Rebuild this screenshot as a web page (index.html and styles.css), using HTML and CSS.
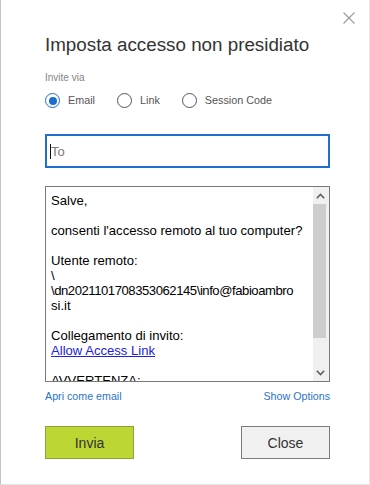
FILE: index.html
```html
<!DOCTYPE html>
<html lang="it">
<head>
<meta charset="utf-8">
<title>Imposta accesso non presidiato</title>
<link rel="stylesheet" href="styles.css">
</head>
<body>
<div class="dialog">
  <div class="topbar">
    <button class="x-btn" aria-label="Chiudi">
      <svg width="12" height="12" viewBox="0 0 12 12"><path d="M0.5 0.5 L11.5 11.5 M11.5 0.5 L0.5 11.5" stroke="#9a9a9a" stroke-width="1.1" fill="none"/></svg>
    </button>
  </div>
  <h1 class="title">Imposta accesso non presidiato</h1>
  <div class="label">Invite via</div>
  <div class="radios">
    <label class="radio"><span class="circle checked"><span class="dot"></span></span><span class="rtext">Email</span></label>
    <label class="radio"><span class="circle"></span><span class="rtext">Link</span></label>
    <label class="radio"><span class="circle"></span><span class="rtext">Session Code</span></label>
  </div>
  <div class="to-field"><span class="caret"></span><span class="placeholder">To</span></div>
  <div class="message">
    <div class="msg-text">
      <p>Salve,</p>
      <p>consenti l'accesso remoto al tuo computer?</p>
      <p>Utente remoto:<br>\<br><span class="tight">\dn2021101708353062145\info@fabioambro</span><br>si.it</p>
      <p>Collegamento di invito:<br><a class="access" href="#">Allow Access Link</a></p>
      <p>AVVERTENZA:</p>
    </div>
    <div class="scrollbar">
      <div class="sb-arrow">
        <svg width="9" height="6" viewBox="0 0 9 6"><path d="M0.8 5.2 L4.5 1.5 L8.2 5.2" stroke="#606060" stroke-width="1.6" fill="none"/></svg>
      </div>
      <div class="sb-track"><div class="sb-thumb"></div></div>
      <div class="sb-arrow">
        <svg width="9" height="6" viewBox="0 0 9 6"><path d="M0.8 0.8 L4.5 4.5 L8.2 0.8" stroke="#606060" stroke-width="1.6" fill="none"/></svg>
      </div>
    </div>
  </div>
  <div class="links">
    <a href="#" class="link">Apri come email</a>
    <a href="#" class="link">Show Options</a>
  </div>
  <div class="buttons">
    <button class="btn send">Invia</button>
    <button class="btn close">Close</button>
  </div>
</div>
</body>
</html>
```

FILE: styles.css
```css
html, body {
  margin: 0;
  padding: 0;
  background: #ffffff;
}
body {
  font-family: "Liberation Sans", Arial, sans-serif;
}
.dialog {
  width: 370px;
  height: 485px;
  box-sizing: border-box;
  border-left: 1px solid #c4c4c4;
  border-right: 1px solid #e6e6e6;
  border-bottom: 1px solid #e6e6e6;
  padding: 0 39px 0 44px;
  display: flex;
  flex-direction: column;
  background: #fff;
}
.topbar {
  height: 33px;
  display: flex;
  justify-content: flex-end;
  align-items: flex-start;
}
.x-btn {
  margin: 12px -25px 0 0;
  padding: 0;
  width: 12px;
  height: 12px;
  border: 0;
  background: transparent;
  display: flex;
}
.title {
  margin: 0;
  font-size: 18.8px;
  line-height: 24px;
  font-weight: normal;
  color: #333333;
  white-space: nowrap;
}
.label {
  margin-top: 15px;
  font-size: 10px;
  line-height: 12px;
  color: #858585;
}
.radios {
  margin-top: 9px;
  height: 15px;
  display: flex;
  align-items: center;
  gap: 22px;
}
.radio {
  display: flex;
  align-items: center;
  gap: 8px;
}
.circle {
  width: 15px;
  height: 15px;
  box-sizing: border-box;
  border: 1px solid #555555;
  border-radius: 50%;
  display: flex;
  align-items: center;
  justify-content: center;
}
.circle.checked {
  border-color: #1b6fd1;
}
.dot {
  width: 8px;
  height: 8px;
  border-radius: 50%;
  background: #1b6fd1;
}
.rtext {
  font-size: 10.8px;
  line-height: 15px;
  color: #555555;
}
.to-field {
  margin-top: 26px;
  height: 34px;
  box-sizing: border-box;
  border: 2px solid #1f6fcf;
  display: flex;
  align-items: center;
  padding-left: 3px;
}
.caret {
  width: 1px;
  height: 15px;
  background: #111;
  margin-right: -1px;
}
.placeholder {
  font-size: 13px;
  color: #7a7a7a;
  padding-left: 1px;
}
.message {
  margin-top: 18px;
  height: 196px;
  box-sizing: border-box;
  border: 1px solid #7a7a7a;
  display: flex;
  overflow: hidden;
}
.msg-text {
  flex: 1;
  padding: 6px 0 0 5px;
  font-size: 13.1px;
  line-height: 15px;
  color: #000;
  overflow: hidden;
  white-space: nowrap;
}
.msg-text p {
  margin: 0 0 15px 0;
}
.tight {
  letter-spacing: -0.45px;
}
.access {
  color: #2222d9;
  text-decoration: underline;
}
.scrollbar {
  width: 16px;
  background: #f0f0f0;
  display: flex;
  flex-direction: column;
}
.sb-arrow {
  height: 17px;
  display: flex;
  align-items: center;
  justify-content: center;
  padding-right: 2px;
}
.sb-track {
  flex: 1;
  display: flex;
  flex-direction: column;
}
.sb-thumb {
  width: 13px;
  height: 134px;
  background: #cdcdcd;
}
.links {
  margin-top: 7px;
  display: flex;
  justify-content: space-between;
  font-size: 10.7px;
  line-height: 14px;
}
.link {
  color: #2b74c7;
  text-decoration: none;
}
.buttons {
  margin-top: 23px;
  display: flex;
  justify-content: space-between;
}
.btn {
  width: 89px;
  height: 33px;
  box-sizing: border-box;
  font-family: "Liberation Sans", Arial, sans-serif;
  font-size: 14px;
  color: #333;
  padding: 0;
}
.send {
  background: #bcd633;
  border: 1px solid #8fa236;
}
.close {
  background: #f0f0f0;
  border: 1px solid #7c7c7c;
}
```
